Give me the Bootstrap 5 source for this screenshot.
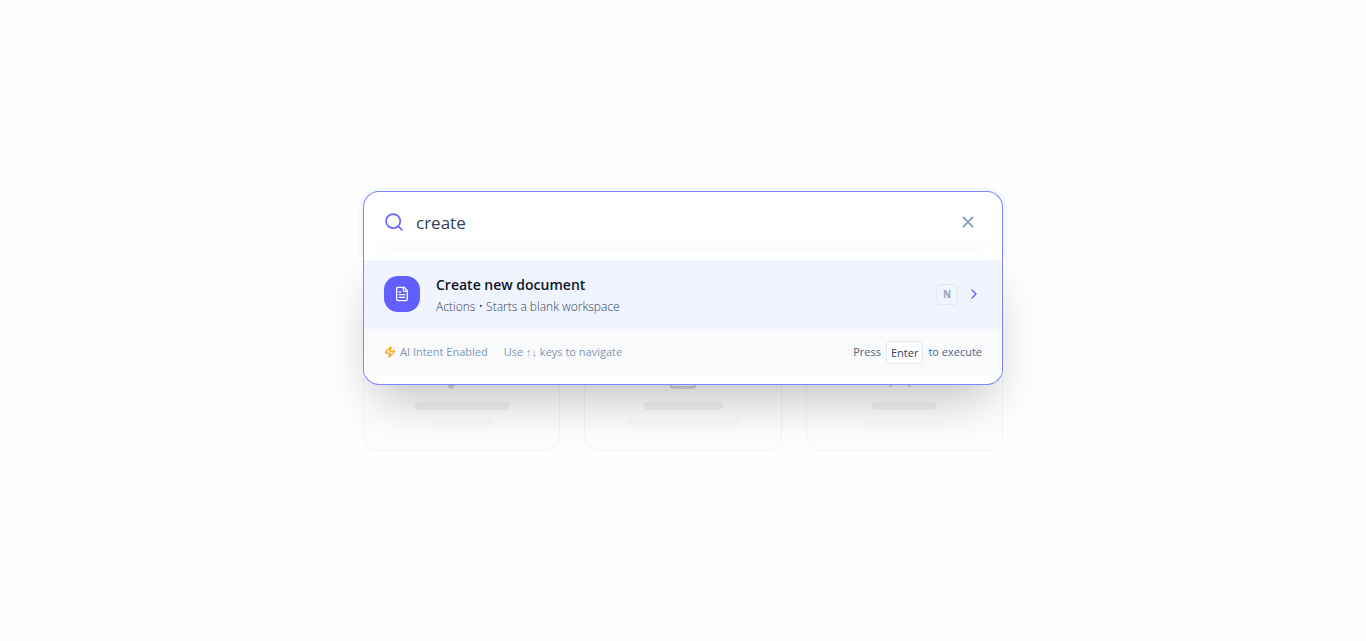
<!DOCTYPE html>
<html lang="en">
<head>
<meta charset="utf-8">
<meta name="viewport" content="width=device-width, initial-scale=1">
<title>Command palette</title>
<link href="https://cdn.jsdelivr.net/npm/bootstrap@5.3.0/dist/css/bootstrap.min.css" rel="stylesheet">
<style>
body { background: #fefefe; font-family: "Open Sans", "Noto Sans", sans-serif; color: #1e293b; }
svg { fill: none; stroke: currentColor; stroke-width: 2; stroke-linecap: round; stroke-linejoin: round; flex: none; }
.palette { width: 100%; max-width: 640px; }
.search-bar { height: 62px; padding: 0 20px; gap: 12px; background: #fff; border: 1px solid #7c86ff; border-bottom-color: transparent; border-radius: 16px 16px 0 0; box-shadow: 0 0 0 4px #f4f7ff; }
.search-bar input { padding: 2px 0 0; font-size: 17px; line-height: 28px; color: #314158; outline: 0; min-width: 0; }
.accent { color: #615fff; }
.clear-btn { padding: 5px; color: #90a1b9; line-height: 1; }
.clear-btn svg { stroke-width: 2.5; }
.results { top: 61px; padding: 8px 0; background: #fff; border: 1px solid #7c86ff; border-top: 0; border-radius: 0 0 16px 16px; box-shadow: 0 25px 50px -12px rgba(0, 0, 0, .25); }
.result { height: 69px; padding: 0 20px; gap: 16px; background: #f0f4ff; }
.result-icon { width: 36px; height: 36px; border-radius: 14px; background: #615fff; }
.result-title { font-size: 14px; line-height: 20px; font-weight: 600; color: #0f172b; margin-top: 2px; }
.result-meta { font-size: 12px; font-weight: 300; line-height: 16px; color: #314158; margin-top: 4px; }
.key { font-family: inherit; border: 1px solid #e2e8f0; border-radius: 4px; }
.key-shortcut { width: 22px; height: 21px; padding: 0; font-size: 10px; line-height: 18px; font-weight: 700; text-align: center; color: #90a1b9; background: #f1f5f9; }
.key-enter { padding: 2px 4px; font-size: 11px; line-height: 17px; color: #314158; background: #fff; }
.hints { height: 47px; padding: 0 20px; font-size: 11px; font-weight: 500; color: #8496af; background: #f8fafc; }
.bolt { color: #fe9a00; stroke-width: 2.5; }
.hint-run { gap: 5px; color: #52647e; }
.tiles { margin-top: 48px; gap: 24px; }
.tile { flex: 1 1 0; height: 150px; padding: 24px; border: 1px solid #f4f4f4; border-radius: 16px; color: #d8d8d8; }
.bar { height: 8px; margin-top: 12px; border-radius: 4px; background: #f3f3f3; }
.bar-faint { margin-top: 8px; background: #fafafa; }
</style>
</head>
<body>
<main class="min-vh-100 d-flex align-items-center justify-content-center">
  <div class="palette position-relative">
    <div class="search-bar d-flex align-items-center">
      <svg class="accent" width="20" height="20" viewBox="0 0 24 24" aria-hidden="true"><circle cx="11" cy="11" r="8.500"/><path d="m21.500 21.500-4.400-4.400"/></svg>
      <input class="flex-grow-1 border-0 bg-transparent" type="text" value="create" aria-label="Search commands">
      <button class="clear-btn btn border-0" type="button" aria-label="Clear"><svg class="d-block" width="18" height="18" viewBox="0 0 24 24"><path d="M18 6 6 18M6 6l12 12"/></svg></button>
    </div>
    <div class="results position-absolute start-0 end-0 z-1 overflow-hidden">
      <div class="result d-flex align-items-center">
        <div class="result-icon d-flex align-items-center justify-content-center text-white"><svg width="16" height="16" viewBox="0 0 24 24" aria-hidden="true"><path d="M15 2H6a2 2 0 0 0-2 2v16a2 2 0 0 0 2 2h12a2 2 0 0 0 2-2V7Z"/><path d="M14 2v4a2 2 0 0 0 2 2h4M10 9H8M16 13H8M16 17H8"/></svg></div>
        <div class="flex-grow-1">
          <div class="result-title">Create new document</div>
          <div class="result-meta">Actions • Starts a blank workspace</div>
        </div>
        <div class="d-flex align-items-center gap-2">
          <kbd class="key key-shortcut">N</kbd>
          <svg class="accent" width="16" height="16" viewBox="0 0 24 24" aria-hidden="true"><path d="m9 18 6-6-6-6"/></svg>
        </div>
      </div>
      <div class="hints d-flex align-items-center justify-content-between">
        <div class="d-flex align-items-center gap-3">
          <span class="d-flex align-items-center gap-1"><svg class="bolt" width="12" height="12" viewBox="0 0 24 24" aria-hidden="true"><path d="M4 14a1 1 0 0 1-.78-1.63l9.9-10.2a.5.5 0 0 1 .86.46l-1.92 6.02A1 1 0 0 0 13 10h7a1 1 0 0 1 .78 1.63l-9.9 10.2a.5.5 0 0 1-.86-.46l1.92-6.02A1 1 0 0 0 11 14z"/></svg>AI Intent Enabled</span>
          <span>Use ↑↓ keys to navigate</span>
        </div>
        <div class="hint-run d-flex align-items-center">Press <kbd class="key key-enter">Enter</kbd> to execute</div>
      </div>
    </div>
    <div class="tiles d-flex">
      <div class="tile d-flex flex-column align-items-center justify-content-end">
        <svg width="32" height="32" viewBox="0 0 24 24" aria-hidden="true"><path d="M12 3l2 5.500L20 10l-6 2L12 17l-2-5L4 10l6-1.500z"/><path d="M4 22.300 2.200 20.500h3.600z" fill="currentColor"/></svg>
        <div class="bar" style="width:96px"></div><div class="bar bar-faint" style="width:64px"></div>
      </div>
      <div class="tile d-flex flex-column align-items-center justify-content-end">
        <svg width="32" height="32" viewBox="0 0 24 24" aria-hidden="true"><rect x="3" y="4" width="18" height="18" rx="2"/><path d="M8 2v4M16 2v4M3 10h18"/></svg>
        <div class="bar" style="width:80px"></div><div class="bar bar-faint" style="width:112px"></div>
      </div>
      <div class="tile d-flex flex-column align-items-center justify-content-end">
        <svg width="32" height="32" viewBox="0 0 24 24" aria-hidden="true"><path d="M16 21v-2a4 4 0 0 0-4-4H6a4 4 0 0 0-4 4v2"/><circle cx="9" cy="7" r="4"/></svg>
        <div class="bar" style="width:64px"></div><div class="bar bar-faint" style="width:80px"></div>
      </div>
    </div>
  </div>
</main>
<script src="https://cdn.jsdelivr.net/npm/bootstrap@5.3.0/dist/js/bootstrap.bundle.min.js"></script>
</body>
</html>
